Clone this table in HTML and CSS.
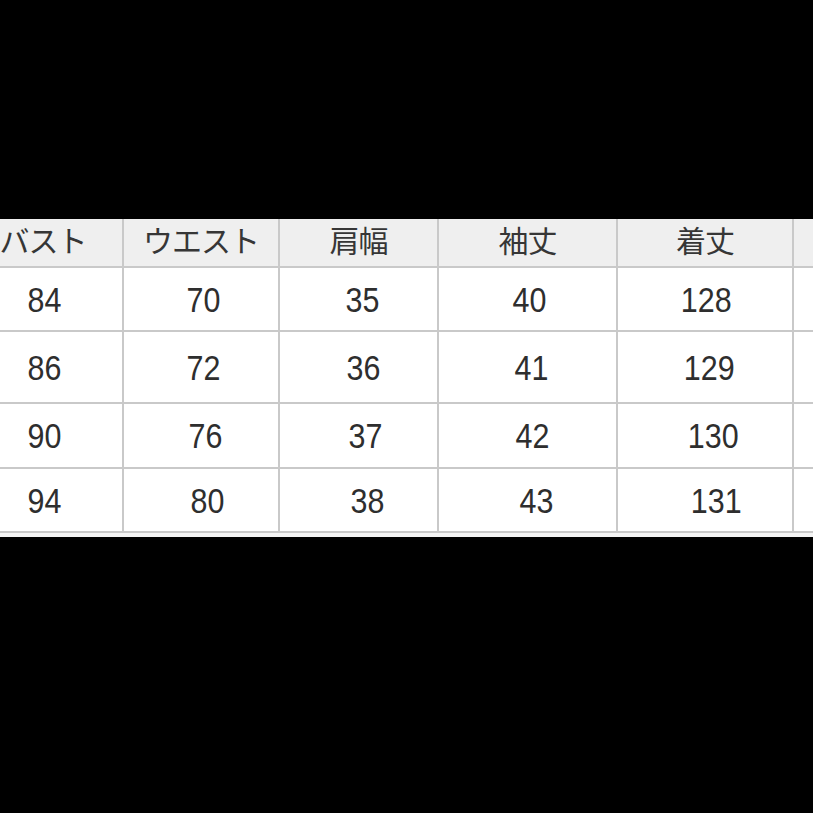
FILE: index.html
```html
<!DOCTYPE html>
<html lang="ja">
<head>
<meta charset="utf-8">
<title>サイズ表</title>
<link rel="stylesheet" href="styles.css">
</head>
<body>
<div class="page">
  <div class="top-band"></div>
  <div class="table-wrap">
    <div class="grid">
      <div class="cell head"><span>バスト</span></div>
      <div class="cell head"><span>ウエスト</span></div>
      <div class="cell head"><span>肩幅</span></div>
      <div class="cell head"><span>袖丈</span></div>
      <div class="cell head"><span>着丈</span></div>
      <div class="cell head"></div>

      <div class="cell"><span class="num dx1">84</span></div>
      <div class="cell"><span class="num dx2">70</span></div>
      <div class="cell"><span class="num dx4">35</span></div>
      <div class="cell"><span class="num dx2">40</span></div>
      <div class="cell"><span class="num dx1">128</span></div>
      <div class="cell"></div>

      <div class="cell"><span class="num dx1">86</span></div>
      <div class="cell"><span class="num dx2">72</span></div>
      <div class="cell"><span class="num dx5">36</span></div>
      <div class="cell"><span class="num dx4">41</span></div>
      <div class="cell"><span class="num dx4">129</span></div>
      <div class="cell"></div>

      <div class="cell"><span class="num dx1">90</span></div>
      <div class="cell"><span class="num dx4">76</span></div>
      <div class="cell"><span class="num dx7">37</span></div>
      <div class="cell"><span class="num dx5">42</span></div>
      <div class="cell"><span class="num dx8">130</span></div>
      <div class="cell"></div>

      <div class="cell"><span class="num dx1">94</span></div>
      <div class="cell"><span class="num dx6">80</span></div>
      <div class="cell"><span class="num dx9">38</span></div>
      <div class="cell"><span class="num dx9">43</span></div>
      <div class="cell"><span class="num dx11">131</span></div>
      <div class="cell"></div>
    </div>
    <div class="strip"></div>
  </div>
</div>
</body>
</html>
```

FILE: styles.css
```css
html, body {
  margin: 0;
  padding: 0;
  background: #000;
  overflow: hidden;
}

.page {
  width: 813px;
  height: 813px;
  overflow: hidden;
  background: #000;
}

.top-band {
  height: 219px;
}

.table-wrap {
  margin-left: -36px;
  width: 1100px;
}

.grid {
  display: grid;
  grid-template-columns: 158px 154px 157px 177px 174px 260px;
  grid-template-rows: 47px 62px 70px 63px 62px;
  column-gap: 2px;
  row-gap: 2px;
  padding-bottom: 2px;
  background: #c9c9c9;
}

.cell {
  background: #ffffff;
  display: flex;
  align-items: center;
  justify-content: center;
  color: #333333;
}

.cell.head {
  background: #efefef;
  font-family: "Noto Sans CJK JP", "Noto Sans", sans-serif;
  font-size: 30px;
  color: #363636;
  padding-bottom: 8px;
  box-sizing: border-box;
  letter-spacing: -1px;
}

.num {
  --dx: 0px;
  display: inline-block;
  font-family: "Liberation Sans", Arial, sans-serif;
  font-size: 35px;
  line-height: 1;
  color: #2e2e2e;
  transform: translateX(var(--dx)) scaleX(0.87);
}

.dx1 { --dx: 1px; }
.dx2 { --dx: 2px; }
.dx4 { --dx: 4px; }
.dx5 { --dx: 5px; }
.dx6 { --dx: 6px; }
.dx7 { --dx: 7px; }
.dx8 { --dx: 8px; }
.dx9 { --dx: 9px; }
.dx11 { --dx: 11px; }

.strip {
  height: 4px;
  background: #f4f4f4;
}
```
